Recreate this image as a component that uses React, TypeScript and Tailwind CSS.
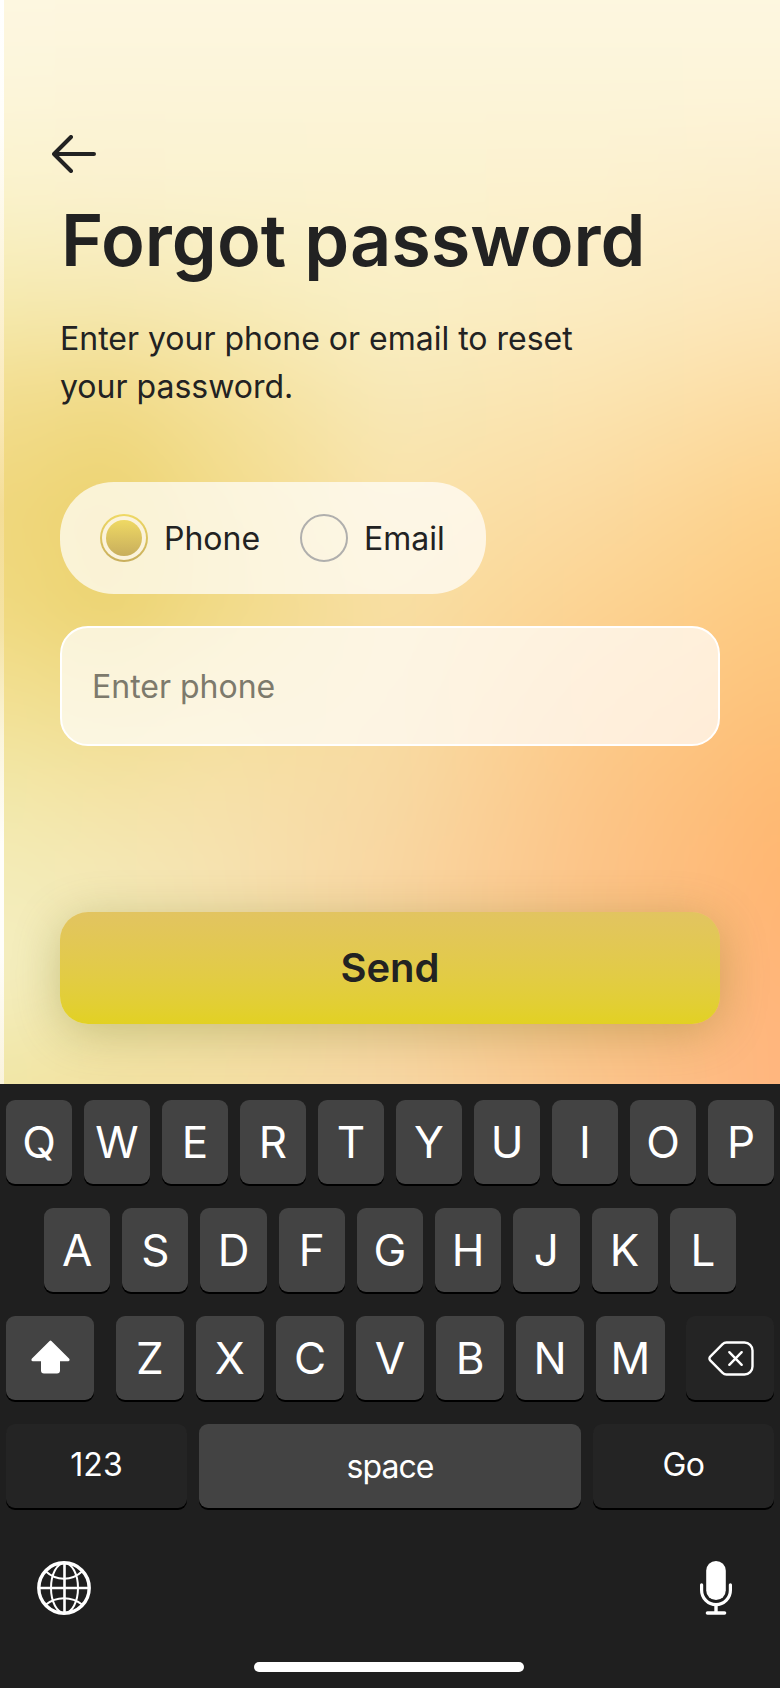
import React from "react";

type MeshRow = { y: number; colors: string[] };

const MESH_X = [0, 110, 220, 390, 585, 780];

const MESH: MeshRow[] = [
  { y: 0, colors: ["#fdf7e1", "#fdf7e0", "#fdf7e0", "#fdf7e0", "#fdf7e0", "#fdf7e0"] },
  { y: 100, colors: ["#fcf5d9", "#fcf4d8", "#fcf4d8", "#fcf4d8", "#fcf4d8", "#fdf4d8"] },
  { y: 200, colors: ["#faf2ca", "#faf1cd", "#faf2ce", "#fbf2ce", "#fcf1cd", "#fcedca"] },
  { y: 310, colors: ["#f5e9ad", "#f5e7ae", "#f7eab5", "#f9efc4", "#fbebc0", "#fce6b8"] },
  { y: 400, colors: ["#f2dd8e", "#f1da87", "#f4e098", "#f8e8b6", "#fbe4b0", "#fcdca3"] },
  { y: 500, colors: ["#f0d77d", "#ecd370", "#f2db89", "#f9e3ab", "#fbdba2", "#fdd28c"] },
  { y: 600, colors: ["#f0d97f", "#ecd370", "#f1da86", "#f8dfa3", "#fcd494", "#fdca81"] },
  { y: 700, colors: ["#f2e093", "#f0dc8c", "#f4df99", "#f8dca2", "#fdcc8b", "#fdc27a"] },
  { y: 790, colors: ["#f2e8a9", "#f4e3a5", "#f6e1a9", "#f8d9a3", "#fcc789", "#feba73"] },
  { y: 880, colors: ["#f3ecb8", "#f4e8b6", "#f6e2b1", "#f9d6a1", "#fcc488", "#ffb672"] },
  { y: 970, colors: ["#f5efc1", "#f4eab6", "#f5e4ad", "#f9d6a3", "#fcc48a", "#ffb578"] },
  { y: 1084, colors: ["#f0e6a5", "#f2e1a0", "#f4dfa2", "#f7d7a3", "#fbc68c", "#ffb57e"] },
];

const BLEED = 80;

function GradientMesh() {
  return (
    <div className="absolute inset-0 overflow-hidden">
      <div className="absolute -inset-[80px] blur-[28px]">
        {MESH.map((row, i) => {
          const stops = row.colors.map((c, k) => `${c} ${MESH_X[k] + BLEED}px`).join(", ");
          const from = i === 0 ? 0 : MESH[i - 1].y + BLEED;
          const fade = `linear-gradient(to bottom, transparent ${from}px, black ${row.y + BLEED}px)`;
          return (
            <div
              key={row.y}
              className="absolute inset-0"
              style={{
                backgroundImage: `linear-gradient(to right, ${stops})`,
                maskImage: i === 0 ? undefined : fade,
              }}
            />
          );
        })}
      </div>
      <div className="absolute inset-y-0 left-0 w-1 bg-[linear-gradient(to_bottom,#ffffff_0%,#fffefa_12%,#fdf6df_24%,#fae9b8_38%,#f4dd96_47%,#f5e3a4_58%,#fbf5dc_68%,#fffefb_78%,#fffefa_88%,#faf3dc_100%)]" />
    </div>
  );
}

function Key({ label, className = "" }: { label: string; className?: string }) {
  return (
    <button
      className={`flex h-[84px] min-w-0 flex-1 items-center justify-center rounded-[9px] bg-[#434343] text-[44px] leading-none text-white shadow-[0_2px_0_#000] ${className}`}
    >
      {label}
    </button>
  );
}

function BackArrow() {
  return (
    <svg className="h-[38px] w-11" viewBox="0 0 44 38" fill="none" stroke="#222" strokeWidth="4" strokeLinecap="round" strokeLinejoin="round">
      <path d="M42 19H2M19 2L2 19l17 17" />
    </svg>
  );
}

function ShiftIcon() {
  return (
    <svg className="h-[34px] w-[39px]" viewBox="0 0 39 34" fill="#fff">
      <path d="M18.6.9a1.3 1.3 0 0 1 1.8 0L38 18.600c1 1 .7 2.700-.900 2.700H29V30.500a3 3 0 0 1-3 3H13a3 3 0 0 1-3-3V21.300H1.900C.3 21.300 0 19.600 1 18.600Z" />
    </svg>
  );
}

function DeleteIcon() {
  return (
    <svg className="ml-px h-[35px] w-[46px]" viewBox="0 0 46 35" fill="none" stroke="#fff" strokeWidth="2.400" strokeLinecap="round" strokeLinejoin="round">
      <path d="M18.500 1.500H36.500a8 8 0 0 1 8 8v16a8 8 0 0 1-8 8H18.500a5.500 5.500 0 0 1-3.900-1.600L2.200 19.300a2.500 2.500 0 0 1 0-3.600L14.600 3.100A5.500 5.500 0 0 1 18.500 1.500Z" />
      <path d="M21.300 11.200l12.400 12.600M33.700 11.200L21.300 23.800" />
    </svg>
  );
}

function GlobeIcon() {
  return (
    <svg className="size-[54px]" viewBox="0 0 54 54" fill="none" stroke="#fff">
      <circle cx="27" cy="27" r="25.200" strokeWidth="3.400" />
      <path d="M27.500 2v50M2 27h50" strokeWidth="2.600" />
      <ellipse cx="27.500" cy="27" rx="13.500" ry="25" strokeWidth="2" />
      <path d="M9 10.500c10 9.500 26 9.500 36 0M9 43.500c10-8.500 26-8.500 36 0" strokeWidth="2" />
    </svg>
  );
}

function MicIcon() {
  return (
    <svg className="h-[54px] w-8" viewBox="0 0 32 54" fill="none" stroke="#fff" strokeLinecap="round">
      <rect x="6.200" y="0" width="19.600" height="39" rx="9.800" fill="#fff" stroke="none" />
      <path d="M1.600 23.800v5.400a14.400 14.400 0 0 0 28.800 0v-5.400" strokeWidth="3.200" />
      <path d="M16 44v8" strokeWidth="3.400" strokeLinecap="butt" />
      <path d="M7.500 52h17" strokeWidth="3.600" />
    </svg>
  );
}

export default function App() {
  return (
    <div className="flex h-[1688px] w-[780px] flex-col overflow-hidden bg-[#1f1f1f] font-['Inter',sans-serif] text-[#222]">
      <main className="relative h-[1084px] shrink-0">
        <GradientMesh />
        <div className="relative flex flex-col px-[60px] pt-[135px]">
          <button aria-label="Back" className="-ml-2 w-11">
            <BackArrow />
          </button>
          <h1 className="mt-[23px] pl-px text-[72px] leading-[88px] font-semibold whitespace-nowrap">Forgot password</h1>
          <p className="mt-[31px] text-[32px] leading-[48px]">
            Enter your phone or email to reset
            <br />
            your password.
          </p>
          <div className="mt-[71px] flex h-28 w-[426px] items-center rounded-[54px] bg-white/70 pl-10 text-[32px]">
            <label className="flex w-[200px] items-center gap-4">
              <span className="flex size-12 items-center justify-center rounded-full bg-linear-to-b from-[#efd964] to-[#c8ae5c] p-0.5">
                <span className="flex size-full items-center justify-center rounded-full bg-[#fbf3db]">
                  <span className="size-9 rounded-full bg-linear-to-b from-[#efd964] to-[#c8ae5c]" />
                </span>
              </span>
              <span className="pt-0.5">Phone</span>
            </label>
            <label className="flex items-center gap-4">
              <span className="size-12 rounded-full border-2 border-[#b0afad]" />
              <span className="pt-0.5">Email</span>
            </label>
          </div>
          <div className="mt-8 flex h-[120px] items-center rounded-[28px] border-2 border-white bg-white/70 px-[30px] pt-0.5 text-[32px] text-[#7d7a6c]">
            Enter phone
          </div>
          <button className="mt-[166px] h-28 rounded-[28px] bg-linear-to-b from-[#e2c460] to-[#e2d122] text-[40px] font-semibold shadow-[0_8px_48px_rgba(105,110,20,0.32)]">
            Send
          </button>
        </div>
      </main>

      <section className="flex flex-1 flex-col px-1.5 pt-4">
        <div className="flex flex-col gap-6">
          <div className="flex gap-3">
            {"QWERTYUIOP".split("").map((c) => (
              <Key key={c} label={c} />
            ))}
          </div>
          <div className="flex gap-3 px-[38px]">
            {"ASDFGHJKL".split("").map((c) => (
              <Key key={c} label={c} />
            ))}
          </div>
          <div className="flex justify-between">
            <button aria-label="Shift" className="flex h-[84px] w-[88px] items-center justify-center rounded-[9px] bg-[#434343] pb-[3px] shadow-[0_2px_0_#000]">
              <ShiftIcon />
            </button>
            <div className="flex w-[549px] gap-[11.5px]">
              {"ZXCVBNM".split("").map((c) => (
                <Key key={c} label={c} />
              ))}
            </div>
            <button aria-label="Delete" className="flex h-[84px] w-[88px] items-center justify-center rounded-[9px] bg-[#242424] shadow-[0_2px_0_#000]">
              <DeleteIcon />
            </button>
          </div>
          <div className="flex gap-3 text-[32px] text-white">
            <button className="h-[84px] w-[181px] rounded-[9px] bg-[#242424] pb-0.5 shadow-[0_2px_0_#000]">123</button>
            <button className="h-[84px] flex-1 rounded-[9px] bg-[#434343] pt-0.5 tracking-[-0.03em] shadow-[0_2px_0_#000]">space</button>
            <button className="h-[84px] w-[181px] rounded-[9px] bg-[#242424] pb-0.5 tracking-[-0.02em] shadow-[0_2px_0_#000]">Go</button>
          </div>
        </div>
        <div className="mt-[53px] flex justify-between pr-[42px] pl-[31px]">
          <GlobeIcon />
          <MicIcon />
        </div>
        <div className="mt-[47px] ml-[248px] h-2.5 w-[270px] rounded-full bg-white" />
      </section>
    </div>
  );
}
